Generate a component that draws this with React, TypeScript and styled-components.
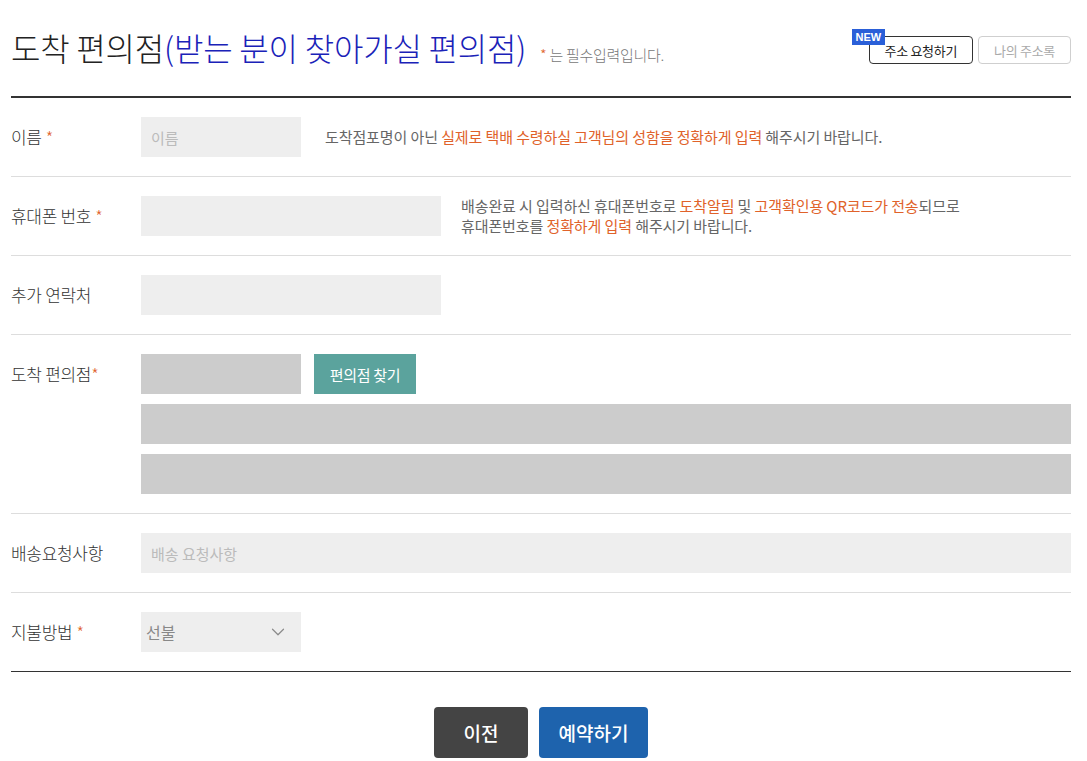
import styled, { createGlobalStyle } from "styled-components";
import { ChevronDown } from "lucide-react";

const GlobalStyle = createGlobalStyle`
  * { box-sizing: border-box; }
  body {
    margin: 0;
    background: #fff;
    font-family: "Noto Sans CJK KR", "Noto Sans", sans-serif;
    color: #333;
  }
`;

const App = () => {
  return (
    <Page>
      <GlobalStyle />
      <Header>
        <Title>
          도착 편의점<Blue>(받는 분이 찾아가실 편의점)</Blue>
        </Title>
        <Note>
          <Star>*</Star> 는 필수입력입니다.
        </Note>
        <HeaderActions>
          <BadgeWrap>
            <NewBadge>NEW</NewBadge>
            <SmallButton>주소 요청하기</SmallButton>
          </BadgeWrap>
          <SmallButton $muted>나의 주소록</SmallButton>
        </HeaderActions>
      </Header>

      <Row>
        <Label>
          이름<Star>*</Star>
        </Label>
        <Field>
          <Line>
            <Input $w={160} placeholder="이름" />
            <Help $gap={24}>
              도착점포명이 아닌 <Em>실제로 택배 수령하실 고객님의 성함을 정확하게 입력</Em> 해주시기 바랍니다.
            </Help>
          </Line>
        </Field>
      </Row>

      <Row>
        <Label>
          휴대폰 번호<Star>*</Star>
        </Label>
        <Field>
          <Line>
            <Input $w={300} />
            <Help $gap={20}>
              배송완료 시 입력하신 휴대폰번호로 <Em>도착알림</Em> 및 <Em>고객확인용 QR코드가 전송</Em>되므로
              <br />
              휴대폰번호를 <Em>정확하게 입력</Em> 해주시기 바랍니다.
            </Help>
          </Line>
        </Field>
      </Row>

      <Row>
        <Label>추가 연락처</Label>
        <Field>
          <Input $w={300} />
        </Field>
      </Row>

      <Row>
        <Label>
          도착 편의점<Star $tight>*</Star>
        </Label>
        <Field>
          <Line>
            <Input $w={160} $dim readOnly />
            <StoreButton>편의점 찾기</StoreButton>
          </Line>
          <Input $dim readOnly />
          <Input $dim readOnly />
        </Field>
      </Row>

      <Row>
        <Label>배송요청사항</Label>
        <Field>
          <Input placeholder="배송 요청사항" />
        </Field>
      </Row>

      <Row $last>
        <Label>
          지불방법<Star>*</Star>
        </Label>
        <Field>
          <Select>
            <span>선불</span>
            <ChevronDown size={22} strokeWidth={1.3} color="#8a8a8a" />
          </Select>
        </Field>
      </Row>

      <Footer>
        <BigButton $bg="#444444" $w={94}>이전</BigButton>
        <BigButton $bg="#1e63ad" $w={109}>예약하기</BigButton>
      </Footer>
    </Page>
  );
};

export default App;

const Page = styled.div`
  width: 1060px;
  margin-left: 11px;
`;

const Header = styled.div`
  height: 98px;
  display: flex;
  align-items: center;
  border-bottom: 2px solid #333;
  padding-bottom: 2px;
`;

const Title = styled.h1`
  margin: 0;
  font-size: 32px;
  font-weight: 300;
  letter-spacing: -0.2px;
  color: #222;
`;

const Blue = styled.span`
  color: #1a22b8;
`;

const Note = styled.span`
  margin: 14px 0 0 10px;
  font-size: 15px;
  font-weight: 300;
  color: #777;
  letter-spacing: -0.3px;
`;

const Star = styled.span<{ $tight?: boolean }>`
  color: #e0622a;
  margin-left: ${(p) => (p.$tight ? "0" : "4px")};
`;

const HeaderActions = styled.div`
  margin-left: auto;
  display: flex;
  gap: 5px;
  margin-top: 6px;
`;

const BadgeWrap = styled.div`
  position: relative;
`;

const NewBadge = styled.span`
  position: absolute;
  left: -17px;
  top: -7px;
  height: 16px;
  background: #2a5fd8;
  color: #fff;
  font-family: "Liberation Sans", Arial, sans-serif;
  font-weight: 700;
  font-size: 11px;
  line-height: 16px;
  padding: 0 4px;
  z-index: 1;
`;

const SmallButton = styled.button<{ $muted?: boolean }>`
  height: 28px;
  padding: 0 15px;
  background: #fff;
  border: 1px solid ${(p) => (p.$muted ? "#cfcfcf" : "#333")};
  border-radius: 4px;
  color: ${(p) => (p.$muted ? "#aaa" : "#222")};
  font-family: inherit;
  font-size: 13px;
  letter-spacing: -0.3px;
`;

const Row = styled.div<{ $last?: boolean }>`
  display: flex;
  padding: 19px 0;
  border-bottom: 1px solid ${(p) => (p.$last ? "#333" : "#ddd")};
`;

const Label = styled.div`
  width: 130px;
  flex-shrink: 0;
  line-height: 40px;
  font-size: 17px;
  font-weight: 300;
  color: #333;
  letter-spacing: -0.3px;
`;

const Field = styled.div`
  flex: 1;
  display: flex;
  flex-direction: column;
  gap: 10px;
`;

const Line = styled.div`
  display: flex;
  align-items: center;
`;

const Input = styled.input<{ $w?: number; $dim?: boolean }>`
  width: ${(p) => (p.$w ? `${p.$w}px` : "100%")};
  height: 40px;
  flex-shrink: 0;
  border: none;
  outline: none;
  background: ${(p) => (p.$dim ? "#cccccc" : "#eeeeee")};
  padding: 0 10px;
  font-family: inherit;
  font-size: 15px;
  color: #333;
  &::placeholder {
    color: #bbb;
  }
`;

const Help = styled.p<{ $gap: number }>`
  margin: 0 0 0 ${(p) => p.$gap}px;
  font-size: 15px;
  line-height: 20px;
  color: #666;
  letter-spacing: -0.1px;
`;

const Em = styled.span`
  color: #e0622a;
`;

const StoreButton = styled.button`
  margin-left: 13px;
  width: 102px;
  height: 40px;
  border: none;
  background: #5ba39d;
  color: #fff;
  font-family: inherit;
  font-size: 15px;
  letter-spacing: -0.3px;
`;

const Select = styled.div`
  width: 160px;
  height: 40px;
  background: #eee;
  display: flex;
  align-items: center;
  justify-content: space-between;
  padding: 0 12px 0 5px;
  font-size: 16px;
  color: #888;
`;

const Footer = styled.div`
  display: flex;
  justify-content: center;
  gap: 11px;
  margin-top: 35px;
`;

const BigButton = styled.button<{ $bg: string; $w: number }>`
  width: ${(p) => p.$w}px;
  height: 51px;
  border: none;
  border-radius: 4px;
  background: ${(p) => p.$bg};
  color: #fff;
  font-family: inherit;
  font-size: 19px;
  font-weight: 500;
`;
